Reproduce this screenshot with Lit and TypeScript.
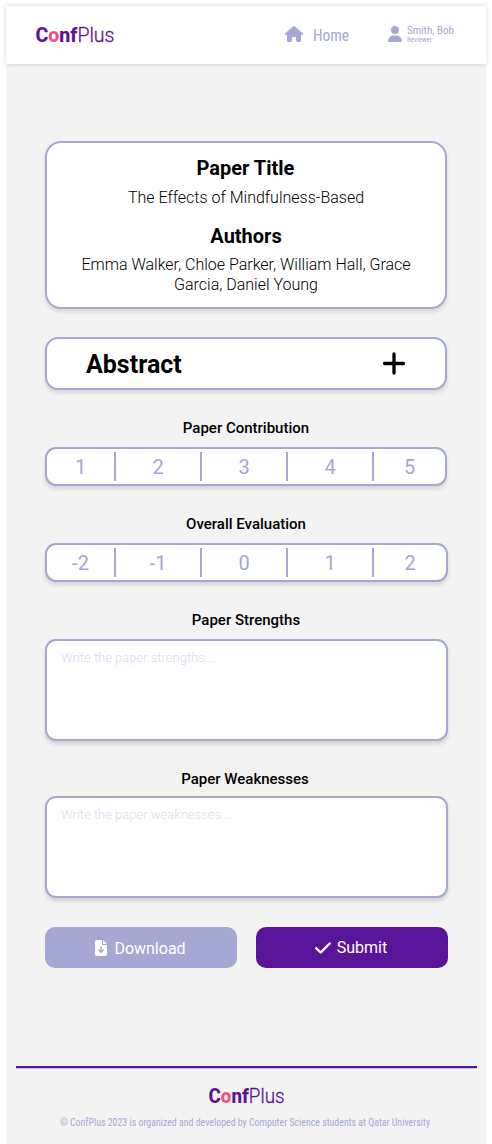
import { LitElement, html, css } from "lit";
import { customElement, property } from "lit/decorators.js";

@customElement("conf-logo")
class ConfLogo extends LitElement {
  @property({ type: Number }) width = 79;
  static styles = css`
    :host { display: block; line-height: 0; }
    svg { display: block; overflow: visible; }
    text { font-family: Roboto, sans-serif; font-size: 19.5px; fill: #5a1499; }
    .bold { font-weight: 800; }
    .light { font-weight: 300; stroke: #5a1499; stroke-width: 0.3px; }
    .accent { fill: #f4517f; }
  `;
  render() {
    return html`<svg width=${this.width} height="20" viewBox="0 0 79 20" preserveAspectRatio="none">
      <text x="-0.5" y="16" textLength="79" lengthAdjust="spacingAndGlyphs"><tspan class="bold">C</tspan><tspan class="bold accent">o</tspan><tspan class="bold">nf</tspan><tspan class="light">Plus</tspan></text>
    </svg>`;
  }
}

@customElement("narrow-text")
class NarrowText extends LitElement {
  @property() text = "";
  @property({ type: Number }) size = 16;
  @property({ type: Number }) width = 40;
  static styles = css`
    :host { display: block; line-height: 0; }
    svg { display: block; overflow: visible; }
    text { font-family: "Roboto Condensed", Roboto, sans-serif; font-stretch: 75%; font-weight: 400; fill: #a5a8d3; }
  `;
  render() {
    return html`<svg width=${this.width} height=${this.size}>
      <text x="0" y=${this.size * 0.85} font-size=${this.size} textLength=${this.width} lengthAdjust="spacingAndGlyphs">${this.text}</text>
    </svg>`;
  }
}

@customElement("score-bar")
class ScoreBar extends LitElement {
  @property({ type: Array }) values: string[] = [];
  static styles = css`
    :host { display: block; }
    .bar {
      box-sizing: border-box; height: 39px; border: 2px solid #a3a8d4; border-radius: 11px;
      background: #fff; box-shadow: 0 3px 4px rgba(0, 0, 0, 0.12);
      display: grid; grid-template-columns: 69px 86px 86px 86px 1fr; padding: 3px 0;
    }
    .cell {
      border-right: 2px solid #a3a8d4; text-align: center; color: #a5a8d3;
      font: 400 20px/29px Roboto, sans-serif; padding-top: 1px; height: 28px;
    }
    .cell:last-child { border-right: 0; }
  `;
  render() {
    return html`<div class="bar">${this.values.map((v) => html`<div class="cell">${v}</div>`)}</div>`;
  }
}

@customElement("app-root")
class AppRoot extends LitElement {
  static styles = css`
    :host { display: block; background: #fff; height: 1144px; overflow: hidden; font-family: Roboto, sans-serif; color: #000; }
    * { box-sizing: border-box; }
    svg { display: block; flex: none; }
    .page { margin: 6px 6px 0; height: 1138px; background: #f3f3f3; }
    .top {
      height: 57.5px; background: #fff; display: flex; align-items: flex-start; padding: 0 32px 0 30px;
      box-shadow: 0 0 5px rgba(0, 0, 0, 0.17); position: relative;
    }
    .logo { margin-top: 20px; }
    .home { margin: 20px 0 0 auto; display: flex; gap: 10px; }
    .home narrow-text { margin-top: 1px; }
    .user { margin: 20px 0 0 39px; display: flex; gap: 5px; }
    .names { display: flex; flex-direction: column; margin-top: -1px; }
    main { margin: 77.5px 38px 0 39px; display: flex; flex-direction: column; }
    .card { width: 402px; border: 2px solid #a3a8d4; background: #fff; box-shadow: 0 3px 4px rgba(0, 0, 0, 0.12); }
    .info { height: 168px; border-radius: 16px; padding: 13px 20px 0; text-align: center; }
    h2 { margin: 0; font-size: 20px; line-height: 24px; font-weight: 700; }
    .heading { padding-right: 1px; }
    .info p { margin: 7px 0 0; font-size: 16px; line-height: 20px; font-weight: 300; }
    .info p.title { margin-top: 8px; }
    .info p + h2 { margin-top: 16px; }
    .abstract {
      margin-top: 28px; height: 53px; border-radius: 13px; padding: 0 39.5px 0 39px;
      display: flex; align-items: center; justify-content: space-between;
      font-size: 25px; font-weight: 700; line-height: 30px;
    }
    .abstract span { padding-top: 2px; }
    h3 { margin: 29px 0 0; text-align: center; font-size: 15px; line-height: 18px; font-weight: 500; height: 18px; padding-right: 1px; }
    h3.wide { padding-right: 3px; }
    score-bar { margin-top: 10px; }
    .c { width: 402px; }
    textarea {
      display: block; height: 102px; width: 403px; resize: none; outline: none; margin: 10px 0 0;
      border: 2px solid #a3a8d4; border-radius: 11px; background: #fff; padding: 8px 14px;
      font: 300 13px/18px Roboto, sans-serif; box-shadow: 0 3px 4px rgba(0, 0, 0, 0.14);
    }
    textarea::placeholder { color: #d9dbee; opacity: 1; }
    .weak { margin-top: 8px; }
    .buttons { display: grid; grid-template-columns: 192px 192px; gap: 19px; margin-top: 29px; }
    button {
      height: 41px; border: 0; border-radius: 10px; color: #fff; font: 400 16px/20px Roboto, sans-serif;
      display: flex; align-items: center; justify-content: center; gap: 7px; padding: 0;
    }
    .download { background: #a5a8d3; padding-right: 1px; }
    .download span { padding-top: 2px; }
    .submit { background: #5a1499; padding-right: 2px; gap: 6px; }
    footer { margin: 98px 9px 0 10px; border-top: 2px solid #5a1499; box-shadow: 0 1px 0 #cdb9de inset; display: flex; flex-direction: column; align-items: center; }
    .mark { margin: 18.5px 0 0 1px; }
    .copy { margin: 10px 3px 0 0; }
  `;
  render() {
    return html`
      <div class="page">
        <header class="top">
          <conf-logo class="logo" width="79"></conf-logo>
          <div class="home">
            <svg width="18" height="16" viewBox="0 0 18 16" fill="#a5a8d3"><path d="M8.300.3a1.100 1.100 0 0 1 1.400 0l8 7c.7.7.2 1.800-.7 1.800h-1v5.500c0 .8-.6 1.400-1.400 1.400H12.300c-.7 0-1.200-.5-1.200-1.200V12c0-.6-.4-1-1-1H7.900c-.6 0-1 .4-1 1v2.800c0 .7-.5 1.200-1.200 1.200H3.400C2.600 16 2 15.400 2 14.600V9.100H1C.1 9.100-.4 8 .3 7.300z"/></svg>
            <narrow-text text="Home" size="16" width="36"></narrow-text>
          </div>
          <div class="user">
            <svg width="14" height="16" viewBox="0 0 448 512" fill="#a5a8d3"><path d="M224 256A128 128 0 1 0 224 0a128 128 0 1 0 0 256zm-45.700 48C79.800 304 0 383.800 0 482.300C0 498.700 13.300 512 29.700 512H418.300c16.400 0 29.700-13.300 29.700-29.700C448 383.800 368.200 304 269.700 304H178.300z"/></svg>
            <div class="names">
              <narrow-text text="Smith, Bob" size="11" width="47"></narrow-text>
              <narrow-text text="Reviewer" size="6.5" width="25"></narrow-text>
            </div>
          </div>
        </header>
        <main>
          <section class="card info">
            <h2 class="heading">Paper Title</h2>
            <p class="title">The Effects of Mindfulness-Based</p>
            <h2>Authors</h2>
            <p>Emma Walker, Chloe Parker, William Hall, Grace<br />Garcia, Daniel Young</p>
          </section>
          <section class="card abstract">
            <span>Abstract</span>
            <svg width="23" height="23" viewBox="0 0 23 23" stroke="#000" stroke-width="3.3" stroke-linecap="round"><path d="M11 2v19M1.500 11.500h19" /></svg>
          </section>
          <h3>Paper Contribution</h3>
          <score-bar class="c" .values=${["1", "2", "3", "4", "5"]}></score-bar>
          <h3>Overall Evaluation</h3>
          <score-bar .values=${["-2", "-1", "0", "1", "2"]}></score-bar>
          <h3>Paper Strengths</h3>
          <textarea placeholder="Write the paper strengths..."></textarea>
          <h3 class="wide">Paper Weaknesses</h3>
          <textarea class="weak" placeholder="Write the paper weaknesses..."></textarea>
          <div class="buttons">
            <button class="download">
              <svg width="12" height="16" viewBox="0 0 384 512" fill="#fff"><path d="M64 0C28.700 0 0 28.700 0 64V448c0 35.300 28.700 64 64 64H320c35.300 0 64-28.700 64-64V160H256c-17.700 0-32-14.300-32-32V0H64zM256 0V128H384L256 0zM216 232V334.100l31-31c9.400-9.400 24.600-9.400 33.900 0s9.400 24.600 0 33.900l-72 72c-9.400 9.400-24.600 9.400-33.900 0l-72-72c-9.400-9.400-9.400-24.600 0-33.900s24.600-9.400 33.900 0l31 31V232c0-13.300 10.700-24 24-24s24 10.700 24 24z"/></svg>
              <span>Download</span>
            </button>
            <button class="submit">
              <svg width="16" height="12" viewBox="0 0 16 12" fill="none" stroke="#fff" stroke-width="2.4" stroke-linecap="round" stroke-linejoin="round"><path d="M1.300 6.300L5.700 10.500L14.700 1.500" /></svg>
              <span>Submit</span>
            </button>
          </div>
        </main>
        <footer>
          <conf-logo class="mark" width="76"></conf-logo>
          <narrow-text class="copy" text="© ConfPlus 2023 is organized and developed by Computer Science students at Qatar University" size="10" width="370"></narrow-text>
        </footer>
      </div>
    `;
  }
}
